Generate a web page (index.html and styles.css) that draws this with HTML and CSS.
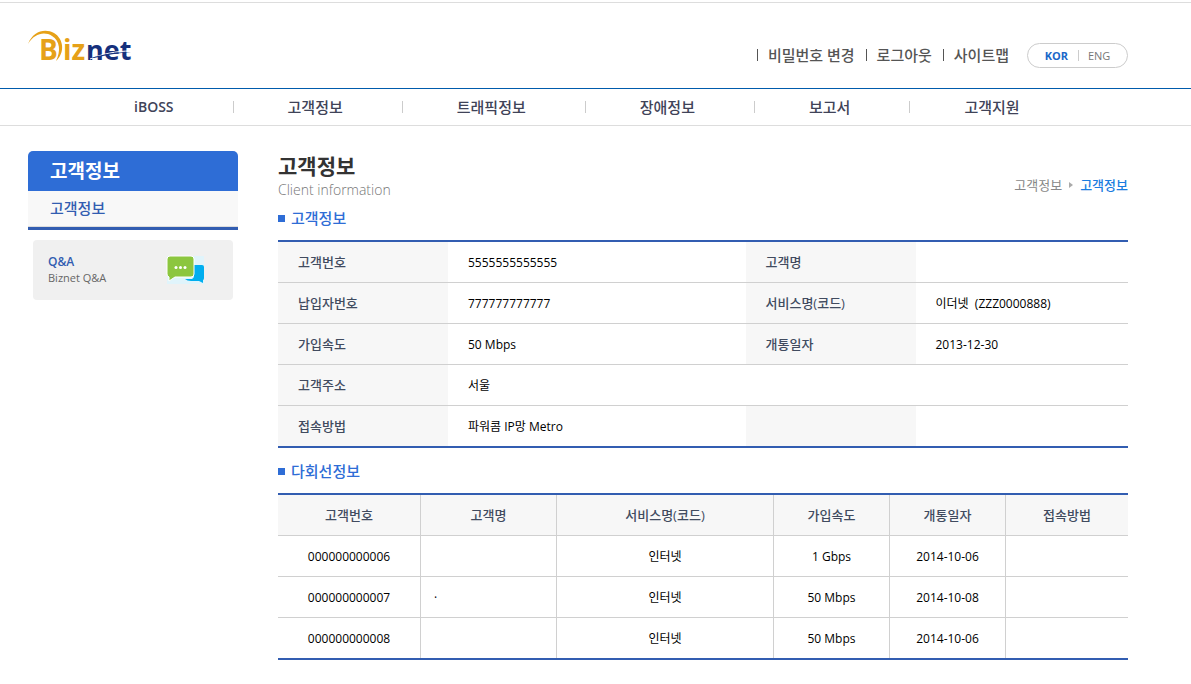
FILE: index.html
```html
<!DOCTYPE html>
<html lang="ko">
<head>
    <meta charset="UTF-8">
    <meta name="viewport" content="width=device-width, initial-scale=1.0">
    <title>Biznet - 고객정보</title>
    <link rel="stylesheet" href="styles.css">
</head>
<body>
    <header class="header">
        <a href="#" class="logo" aria-label="Biznet">
            <svg width="110" height="46" viewBox="0 -3 110 46">
                <path d="M0 15C5 2 17 -1 26 4C36 10 37 24 28 32C33 22 32 12 24 7C16 2 6 5 0 15Z" fill="#e6a118"/>
                <text x="11" y="31" class="logo-b">B</text>
                <text x="35" y="31" class="logo-b">iz</text>
                <text x="58" y="31" class="logo-net">net</text>
                <path d="M62 30C74 25 88 22 103 22" fill="none" stroke="#fff" stroke-width="1"/>
                <path d="M63 29C76 25 88 23 103 23C90 24 78 26 66 29Z" fill="#16307c"/>
            </svg>
        </a>
        <div class="util">
            <ul class="util-menu">
                <li><a href="#">비밀번호 변경</a></li>
                <li><a href="#">로그아웃</a></li>
                <li><a href="#">사이트맵</a></li>
            </ul>
            <div class="lang">
                <a href="#" class="on">KOR</a>
                <a href="#">ENG</a>
            </div>
        </div>
    </header>
    <nav class="gnb">
        <ul>
            <li><a href="#">iBOSS</a></li>
            <li><a href="#">고객정보</a></li>
            <li><a href="#">트래픽정보</a></li>
            <li><a href="#">장애정보</a></li>
            <li><a href="#">보고서</a></li>
            <li><a href="#">고객지원</a></li>
        </ul>
    </nav>
    <div class="container">
        <aside class="side">
            <h2 class="side-title">고객정보</h2>
            <ul class="side-menu">
                <li><a href="#">고객정보</a></li>
            </ul>
            <a href="#" class="qna">
                <span class="qna-text">
                    <strong>Q&amp;A</strong>
                    <span>Biznet Q&amp;A</span>
                </span>
                <svg width="38" height="28" viewBox="0 0 38 28">
                    <rect width="37" height="28" fill="#e0f4fb"/>
                    <path d="M26 9H35Q37 9 37 11V22Q37 24 36 24V27L32 25H24Q20 25 18 23H25Q27 22 27 20Z" fill="#00aeef"/>
                    <path d="M3 0H24Q27 0 27 3V18Q27 21 24 21H8L2 25V21Q0 20 0 18V3Q0 0 3 0Z" fill="#8cc63f" stroke="#fff" stroke-width="1"/>
                    <circle cx="9" cy="11.5" r="1.5" fill="#fff"/>
                    <circle cx="13.5" cy="11.5" r="1.5" fill="#fff"/>
                    <circle cx="18" cy="11.5" r="1.5" fill="#fff"/>
                </svg>
            </a>
        </aside>
        <main class="content">
            <div class="page-head">
                <div>
                    <h1>고객정보</h1>
                    <p>Client information</p>
                </div>
                <div class="location">
                    <a href="#">고객정보</a>
                    <svg width="4" height="6" viewBox="0 0 4 6"><path d="M0 0L4 3L0 6Z" fill="#aaa"/></svg>
                    <a href="#" class="on">고객정보</a>
                </div>
            </div>

            <h3 class="sub-title">고객정보</h3>
            <table class="info">
                <colgroup>
                    <col class="w20"><col class="w35"><col class="w20"><col class="w25">
                </colgroup>
                <tbody>
                    <tr>
                        <th>고객번호</th>
                        <td>5555555555555</td>
                        <th>고객명</th>
                        <td></td>
                    </tr>
                    <tr>
                        <th>납입자번호</th>
                        <td>777777777777</td>
                        <th>서비스명(코드)</th>
                        <td>이더넷 &nbsp;(ZZZ0000888)</td>
                    </tr>
                    <tr>
                        <th>가입속도</th>
                        <td>50 Mbps</td>
                        <th>개통일자</th>
                        <td>2013-12-30</td>
                    </tr>
                    <tr>
                        <th>고객주소</th>
                        <td colspan="3">서울</td>
                    </tr>
                    <tr>
                        <th>접속방법</th>
                        <td>파워콤 IP망 Metro</td>
                        <th></th>
                        <td></td>
                    </tr>
                </tbody>
            </table>

            <h3 class="sub-title">다회선정보</h3>
            <table class="list">
                <colgroup>
                    <col class="c1"><col class="c2"><col class="c3"><col class="c4"><col class="c4"><col class="c5">
                </colgroup>
                <thead>
                    <tr>
                        <th>고객번호</th>
                        <th>고객명</th>
                        <th>서비스명(코드)</th>
                        <th>가입속도</th>
                        <th>개통일자</th>
                        <th>접속방법</th>
                    </tr>
                </thead>
                <tbody>
                    <tr>
                        <td>000000000006</td>
                        <td></td>
                        <td>인터넷</td>
                        <td>1 Gbps</td>
                        <td>2014-10-06</td>
                        <td></td>
                    </tr>
                    <tr>
                        <td>000000000007</td>
                        <td class="left">·</td>
                        <td>인터넷</td>
                        <td>50 Mbps</td>
                        <td>2014-10-08</td>
                        <td></td>
                    </tr>
                    <tr>
                        <td>000000000008</td>
                        <td></td>
                        <td>인터넷</td>
                        <td>50 Mbps</td>
                        <td>2014-10-06</td>
                        <td></td>
                    </tr>
                </tbody>
            </table>
        </main>
    </div>
</body>
</html>
```
FILE: styles.css
```css
*{
    margin: 0;
    padding: 0;
    box-sizing: border-box;
}
body{
    padding-top: 2px;
    background-color: #fff;
    color: #000;
    font-family: "Open Sans", "Noto Sans CJK KR", sans-serif;
    font-size: 12px;
}
ul{
    list-style: none;
}
a{
    color: inherit;
    text-decoration: none;
}
table{
    width: 100%;
    table-layout: fixed;
    border-collapse: separate;
    border-spacing: 0;
    border-top: 2px solid #325db1;
    border-bottom: 2px solid #325db1;
}

/* header */
.header{
    display: flex;
    justify-content: space-between;
    height: 87px;
    padding: 0 63px 0 28px;
    border-top: 1px solid #ddd;
    border-bottom: 1px solid #005bac;
}
.logo{
    padding-top: 23px;
}
.logo svg{
    display: block;
}
.logo-b{
    font: 700 28px "Open Sans", sans-serif;
    fill: #e6a118;
}
.logo-net{
    font: 700 27px "Open Sans", sans-serif;
    fill: #16307c;
}
.util{
    display: flex;
    align-items: center;
    gap: 18px;
    height: 36px;
    margin-top: 34px;
}
.util-menu{
    display: flex;
    gap: 11px;
}
.util-menu li{
    display: flex;
    align-items: center;
    gap: 10px;
    color: #555;
    font-size: 15px;
    font-weight: 500;
    line-height: 20px;
}
.util-menu li::before{
    content: "";
    width: 1px;
    height: 12px;
    background-color: #555;
}
.lang{
    display: flex;
    align-items: center;
    justify-content: center;
    width: 101px;
    height: 25px;
    border: 1px solid #ccc;
    border-radius: 13px;
    color: #777;
    font-size: 11px;
    line-height: 11px;
}
.lang .on{
    padding-right: 10px;
    margin-right: 9px;
    border-right: 1px solid #ccc;
    color: #1a67c9;
    font-weight: 700;
}

/* gnb */
.gnb{
    height: 37px;
    border-bottom: 1px solid #ddd;
}
.gnb ul{
    display: flex;
    align-items: center;
    height: 36px;
    padding-left: 80px;
}
.gnb li{
    display: flex;
    align-items: center;
    height: 12px;
    padding: 0 59px 0 54px;
    border-right: 1px solid #ccc;
    color: #404358;
    font-size: 15px;
    font-weight: 500;
}
.gnb li:first-child{
    font-size: 14px;
    font-weight: 600;
}
.gnb a{
    padding-bottom: 2px;
}
.gnb li:last-child{
    border-right: none;
}

.container{
    display: grid;
    grid-template-columns: 210px 1fr;
    gap: 40px;
    padding: 25px 63px 24px 28px;
}

/* side */
.side-title{
    height: 40px;
    padding-left: 22px;
    border-radius: 5px 5px 0 0;
    background-color: #2e6dd6;
    color: #fff;
    font-size: 19px;
    font-weight: 700;
    line-height: 40px;
}
.side-menu{
    border-bottom: 3px solid #325db1;
    background-color: #f8f8f8;
}
.side-menu a{
    display: block;
    height: 36px;
    padding-left: 22px;
    border-bottom: 1px solid #ddd;
    color: #325db1;
    font-size: 15px;
    font-weight: 500;
    line-height: 35px;
}
.qna{
    display: flex;
    align-items: center;
    justify-content: space-between;
    height: 60px;
    margin: 10px 5px 0;
    padding: 0 28px 0 15px;
    border-radius: 4px;
    background-color: #f0f0f0;
}
.qna svg{
    overflow: visible;
}
.qna-text{
    display: flex;
    flex-direction: column;
    color: #666;
    font-size: 11px;
    line-height: 16px;
}
.qna-text strong{
    color: #325db1;
    font-size: 12px;
    font-weight: 600;
}

/* content */
.page-head{
    display: flex;
    justify-content: space-between;
    align-items: flex-end;
    height: 49px;
}
.page-head h1{
    color: #333;
    font-size: 21px;
    font-weight: 700;
    line-height: 28px;
}
.page-head p{
    color: #777;
    font-size: 14px;
    font-weight: 300;
    line-height: 20px;
}
.location{
    display: flex;
    align-items: center;
    gap: 7px;
    padding-bottom: 5px;
    color: #888;
    font-size: 13px;
    line-height: 20px;
}
.location .on{
    color: #1b7de0;
    font-weight: 500;
}
.sub-title{
    display: flex;
    align-items: center;
    gap: 6px;
    height: 40px;
    padding-bottom: 5px;
    color: #2e6dd6;
    font-size: 15px;
    font-weight: 500;
}
.sub-title::before{
    content: "";
    width: 7px;
    height: 7px;
    margin-top: 2px;
    background-color: #2e6dd6;
}
.info + .sub-title{
    height: 45px;
    padding-bottom: 0;
}
th, td{
    height: 41px;
    border-bottom: 1px solid #d0d0d0;
}
th{
    padding-bottom: 2px;
    background-color: #f7f7f7;
    color: #414b5f;
    font-size: 13px;
    font-weight: 500;
}
tbody tr:last-child th,
tbody tr:last-child td{
    height: 40px;
    border-bottom: none;
}
.info th,
.info td{
    padding-left: 20px;
    text-align: left;
}
.w20{ width: 20%; }
.w35{ width: 35%; }
.w25{ width: 25%; }

.list th,
.list td{
    border-right: 1px solid #d0d0d0;
    text-align: center;
}
.list th:last-child,
.list td:last-child{
    border-right: none;
}
.list .left{
    padding-left: 13px;
    text-align: left;
}
.c1{ width: 143px; }
.c2{ width: 16%; }
.c3{ width: 217px; }
.c4{ width: 116px; }
.c5{ width: 122px; }
```
